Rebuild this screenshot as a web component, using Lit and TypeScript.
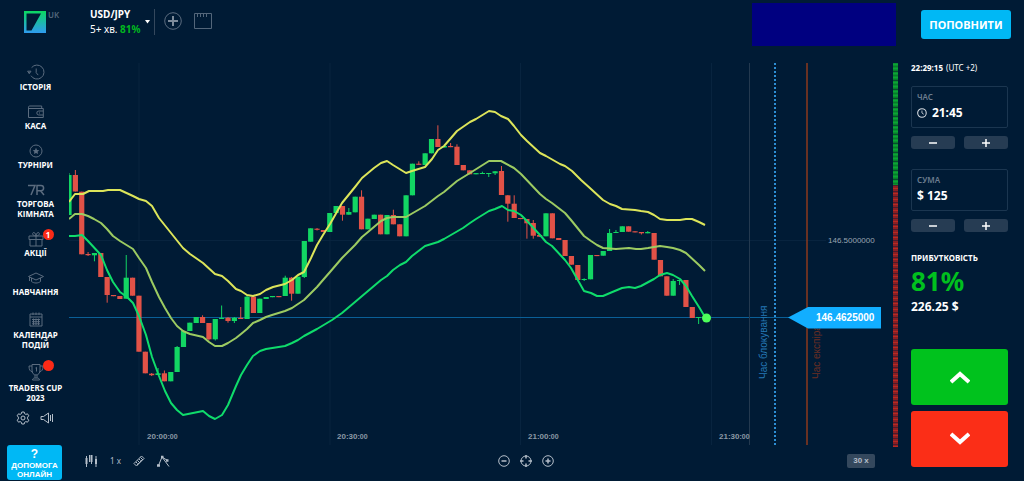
import { LitElement, html, css, svg } from "lit";
import { customElement, state } from "lit/decorators.js";

// open, close, high, low in chart units (y grows downwards)
type Candle = [number, number, number?, number?];

const CANDLES: Candle[] = [
  [215, 175, 173], [175, 191.5, 170], [191.7, 254.3], [254, 255.2, 252, 256], [255.3, 253, 253, 261.3],
  [253, 277], [277, 295, 277, 302.7], [295, 296.2], [296, 299], [298.7, 277.7, 255],
  [277.7, 295.7], [295.7, 351.7], [351.7, 373.3], [373.7, 375.2, 373, 376], [375, 373.3, 368],
  [373.3, 381.3, 370.5], [381.3, 372], [372, 347, 346], [347, 331], [331, 322.7],
  [323, 317], [317, 323, 315.3], [323, 339.3, 323, 340.5], [339.3, 319, 319, 340.5], [319, 317.8, 305.5],
  [317.7, 321, 317, 322.7], [321, 317.7, 317, 323], [317.8, 319, 307], [319, 296.7, 295], [296.7, 313],
  [313, 298.7], [299, 297], [297.2, 296], [296, 297.2], [296, 277.7, 275.7],
  [277.7, 293.7, 277, 300.7], [293.7, 276.7], [277, 241, 241, 278], [241.7, 228.3], [228.7, 229.8, 228, 230.5],
  [230, 232], [232, 213], [213, 206], [206, 214.7, 206, 220.7], [214.7, 212, 208],
  [212.3, 196.7], [196.7, 229.3, 190.3], [229.3, 218.7], [219, 214.7], [214.7, 234.3],
  [234.3, 215], [215, 224.3, 209.7], [224.3, 236.3], [236.3, 195.3], [195.3, 163.7],
  [163.7, 164.8, 161.3], [165, 153.3], [153.3, 139], [139, 147, 125.3], [147.5, 146],
  [146, 147.2, 143], [146.7, 165, 144.3], [165, 170.3], [170.3, 174.3], [174.3, 173.1],
  [174, 173, 171.7], [174, 173, 173, 177], [173.3, 171.3, 171, 175], [171, 195, 166], [195.3, 203.7, 195, 221.7],
  [203.7, 218, 195.3], [218, 219.1], [219, 223.3, 219, 238.7], [223, 235.7, 220, 238.7], [235, 236.7],
  [236.3, 213.3], [213.3, 238.3], [238, 240], [240, 256], [256, 264.7],
  [265, 280], [280, 279, 278.3, 281], [279.3, 255], [255, 256.1], [255.7, 251],
  [251, 233, 229], [233, 232, 230], [232, 226.3], [226.3, 231.7], [231.3, 232.4],
  [232, 233.3, 232, 234.5], [233.3, 232, 231], [233, 259.7], [260, 276.3], [276.3, 295.7],
  [295.7, 281, 279], [281, 280, 280, 285], [280, 307], [307, 318], [318, 317, 317, 324],
];

const UPPER =
  "69,202 75,194 83,194 89,191 103,191 108,190 120,190 133,196 139,199 146,201 152,206 159,218 171,233 183,248 190,254 203,263 215,274 222,276 228,281 236,289 241,291 247,295 253,296 260,294 266,290 273,287 285,284 292,280 298,275 304,272 311,258 317,245 323,235 330,224 342,203 355,187 362,178 368,173 374,168 381,163 387,161 393,165 406,173 412,171 425,167 432,159 438,150 444,146 451,138 457,131 470,122 476,119 489,111 495,112 501,116 508,119 514,126 521,135 527,141 540,153 546,156 560,164 565,166 572,171 581,180 591,189 603,200 610,204 616,206 622,209 635,210 641,211 648,212 654,215 660,219 667,220 680,220 686,219 692,219 699,222 705,225";
const MIDDLE =
  "69,219 75,214 82,214 88,216 94,219 101,223 107,229 113,236 120,241 133,249 139,258 146,268 152,282 159,297 165,308 171,318 177,326 183,331 190,334 203,337 209,342 215,346 222,346 228,343 236,338 241,334 247,329 253,323 260,320 266,317 272,315 285,311 292,308 298,304 304,300 317,287 323,280 330,272 342,258 355,245 362,237 368,232 381,221 387,218 393,217 406,217 425,206 438,196 444,192 457,181 470,173 489,161 501,161 514,168 521,174 540,194 546,199 552,203 565,213 571,220 584,236 591,241 597,245 603,248 616,249 629,248 636,249 641,249 648,248 660,246 667,247 673,248 680,250 686,253 699,265 705,271";
const LOWER =
  "69,236 75,236 82,235 88,241 101,255 107,270 113,282 120,292 127,297 133,303 139,316 146,335 152,357 159,376 165,391 171,403 177,410 183,415 203,411 209,416 215,419 222,415 228,405 236,386 241,375 247,365 253,356 260,351 266,349 285,346 292,343 298,340 304,336 317,329 332,320 342,313 355,302 381,280 387,276 393,270 400,265 406,262 412,256 425,246 438,242 444,239 463,228 470,223 476,219 489,211 495,209 502,206 508,210 514,211 521,215 527,221 540,235 546,242 552,246 565,260 571,268 584,291 591,293 597,296 603,296 610,293 622,288 629,287 635,288 641,286 654,279 660,275 667,273 673,275 680,279 686,286 692,296 699,307 705,317";

const ICONS = {
  history: svg`<path d="M4.6 3.6A7 7 0 1 1 4 11.7M2.2 8v1.500M.6 7.200h3.400L2.300 9.600zM9.200 4.500v4.200l2 2.400"/>`,
  wallet: svg`<path d="M1.500 14.500V4.200a1.200 1.200 0 0 1 1.200-1.200h12v2.500M1.500 5.500h14.800v9H1.500M16.300 8h-4.500a2 2 0 0 0 0 4h4.500M12 10h1"/>`,
  star: svg`<circle cx="9" cy="9" r="6"/><path class="solid" d="M9 5.800l1 2.200 2.300.2-1.700 1.600.5 2.300L9 10.900l-2.100 1.200.5-2.300-1.700-1.600L8 8z"/>`,
  room: svg`<path stroke-width="1.500" d="M1 4.500h7L4 14M10 14V4.500h4a2.600 2.600 0 0 1 0 5.200h-4M13.500 9.700L17 14"/>`,
  gift: svg`<path d="M2 6h14v3.500H2zM3 9.500h12V16H3zM9 6v10M9 6C6.500 5.800 5.300 4.600 5.700 3.300 6.200 1.800 8.500 2.200 9 6c.5-3.800 2.800-4.200 3.300-2.700C12.700 4.600 11.500 5.800 9 6"/>`,
  cap: svg`<path d="M9 4l7.500 3.500L9 11 1.500 7.500zM4.500 9v3.500c2.500 2 6.500 2 9 0V9M2.500 8v4"/>`,
  calendar: svg`<path d="M3 4h12v12H3zM3 7h12M6 2.500V5M9 2.500V5M12 2.500V5M5 9.500h8M5 11.700h8M5 13.800h8M6.500 8.500v6.500M9 8.500v6.500M11.500 8.500v6.500"/>`,
  cup: svg`<path d="M5 1.500h8V7c0 3-1.500 5-4 5S5 10 5 7zM5 3H2c0 3.500 1 5.500 3.600 6M13 3h3c0 3.500-1 5.500-3.600 6M8 12v3M10 12v3M5.500 17c0-1.500 1-2 3.500-2s3.500.5 3.500 2zM8.500 5L9.500 4.300V8.500"/>`,
};

type IconName = keyof typeof ICONS;

interface MenuItem {
  icon: IconName;
  label: string;
  tall?: boolean;
  badge?: string;
}

const MENU: MenuItem[] = [
  { icon: "history", label: "ІСТОРІЯ" },
  { icon: "wallet", label: "КАСА" },
  { icon: "star", label: "ТУРНІРИ" },
  { icon: "room", label: "ТОРГОВА КІМНАТА" },
  { icon: "gift", label: "АКЦІЇ", badge: "1" },
  { icon: "cap", label: "НАВЧАННЯ" },
  { icon: "calendar", label: "КАЛЕНДАР ПОДІЙ", tall: true },
  { icon: "cup", label: "TRADERS CUP 2023", tall: true, badge: "" },
];

@customElement("side-menu")
class SideMenu extends LitElement {
  static styles = css`
    :host { display: flex; flex-direction: column; align-items: center; }
    .list { display: flex; flex-direction: column; gap: 11px; align-self: stretch; padding: 1px 0 0 2px; }
    a { display: flex; flex-direction: column; align-items: center; color: #fff; text-decoration: none; text-align: center; font-weight: 700; font-size: 8px; line-height: 10px; }
    .icon { position: relative; height: 18px; display: flex; align-items: center; }
    .tall { height: 22px; }
    svg { width: 18px; height: 18px; fill: none; stroke: #5b6c7f; stroke-width: 1; display: block; }
    .solid { fill: #5b6c7f; stroke: none; }
    .label { max-width: 60px; }
    .badge { position: absolute; left: 16px; top: -1px; width: 11px; height: 11px; border-radius: 50%; background: #fb2a17; line-height: 11px; font-size: 8px; }
    .tools { display: flex; gap: 10px; margin-top: 7px; }
    button { border: 0; padding: 0; background: none; font: inherit; color: #fff; cursor: pointer; }
    .tools svg { width: 14px; height: 16px; stroke: #b4bec9; }
    .help { width: 55px; height: 35px; margin-top: 19px; border-radius: 3px; background: #00b8f5; font-family: "Liberation Sans", Arial, sans-serif; font-weight: 700; font-size: 8px; line-height: 9px; }
    .mark { display: block; font-size: 12px; line-height: 14px; }
  `;

  render() {
    return html`
      <nav class="list">
        ${MENU.map(
          (m) => html`<a href="#">
            <span class="icon ${m.tall ? "tall" : ""}">
              <svg viewBox="0 0 18 18">${ICONS[m.icon]}</svg>
              ${m.badge === undefined ? "" : html`<span class="badge">${m.badge}</span>`}
            </span>
            <span class="label">${m.label}</span>
          </a>`
        )}
      </nav>
      <div class="tools">
        <button aria-label="Налаштування">
          <svg viewBox="0 0 14 16"><path d="M5.800 2h2.400l.4 1.700 1.300.7 1.600-.6 1.300 2-1.200 1.300v1.800l1.200 1.300-1.300 2-1.600-.6-1.300.7-.4 1.700H5.800l-.4-1.700-1.300-.7-1.600.6-1.300-2 1.200-1.300V7.100L1.200 5.800l1.300-2 1.600.6 1.300-.7z"/><circle cx="7" cy="8" r="2"/></svg>
        </button>
        <button aria-label="Звук">
          <svg viewBox="0 0 14 16"><path d="M1 6.500h2.500L8.500 3v10L3.500 9.500H1zM10.500 5v6M12.500 4v8"/></svg>
        </button>
      </div>
      <button class="help"><span class="mark">?</span>ДОПОМОГА ОНЛАЙН</button>
    `;
  }
}

@customElement("price-chart")
class PriceChart extends LitElement {
  static styles = css`
    :host { display: block; }
    svg { display: block; width: 100%; height: auto; font-family: "Liberation Sans", Arial, sans-serif; }
    .grid { stroke: #08243f; stroke-width: 1; }
    .up { fill: #12d663; stroke: #12d663; }
    .down { fill: #e25247; stroke: #e25247; }
    .body { stroke: none; }
    .wick { stroke-width: 1; }
    .line { fill: none; stroke-width: 2; stroke-linejoin: round; }
    .upper { stroke: #dce55a; }
    .middle { stroke: #9ccb62; }
    .lower { stroke: #0fdc6b; }
    .price { stroke: #0a5f97; stroke-width: 1; }
    .now { stroke: #23394f; stroke-width: 1; }
    .block { stroke: #2d8fd5; stroke-width: 2; stroke-dasharray: 2 2; }
    .expiry { stroke: #8c3a1d; stroke-width: 1.5; }
    .axis { fill: #8d99a6; font-size: 8px; font-weight: 700; }
    .sec { font-size: 7px; }
    .value { fill: #9aa5b1; font-size: 8px; }
    .turned { font-size: 10px; }
    .tag { fill: #12aeff; }
    .tagtext { fill: #fff; font-size: 10px; font-weight: 700; }
    .dot { fill: #4dff5a; }
  `;

  render() {
    const times: [number, string][] = [[147, "20:00"], [337, "20:30"], [528, "21:00"], [719, "21:30"]];
    return html`<svg viewBox="69 63 829 384" role="img" aria-label="USD/JPY">
      <defs>
        <pattern id="buy" width="6" height="9" patternUnits="userSpaceOnUse">
          <rect width="6" height="9" fill="#077a2b" /><path d="M0 1.500h6M0 5.500h6" stroke="#0aa534" stroke-width="2" /><path d="M0 8.500h6" stroke="#064e2c" />
        </pattern>
        <pattern id="sell" width="6" height="11" patternUnits="userSpaceOnUse">
          <rect width="6" height="11" fill="#8a1f24" /><path d="M0 1.500h6M0 6.500h6" stroke="#b92a22" /><path d="M0 4.500h6M0 9.500h6" stroke="#4c1b2c" />
        </pattern>
      </defs>
      <path class="grid" d="M139 63V445M330 63V445M520.500 63V445M711.500 63V445M69 240.500H826" />
      <path class="price" d="M69 317.500H800" />
      ${CANDLES.map(([open, close, high, low], i) => {
        const x = 69 + i * 6.36;
        const top = Math.min(open, close);
        const bottom = Math.max(open, close);
        const kind = close < open ? "up" : "down";
        return svg`<g class=${kind}>
          <line class="wick" x1=${x} x2=${x} y1=${high ?? top} y2=${low ?? bottom}></line>
          <rect class="body" x=${x - 2.6} y=${top} width="5.2" height=${bottom - top}></rect>
        </g>`;
      })}
      <polyline class="line upper" points=${UPPER} />
      <polyline class="line middle" points=${MIDDLE} />
      <polyline class="line lower" points=${LOWER} />
      <circle class="dot" cx="706.500" cy="318" r="4.500" />
      <path class="now" d="M749.500 63V445" />
      <path class="block" d="M775 63V445" />
      <path class="expiry" d="M807 63V445" />
      <text class="turned" fill="#2478b5" transform="translate(767 379) rotate(-90)">Час блокування</text>
      <text class="turned" fill="#6c2e22" transform="translate(820 379) rotate(-90)">Час експірації</text>
      <path class="tag" d="M788 317.500L808 307H881V328.500H808z" />
      <text class="tagtext" x="816" y="321">146.4625000</text>
      <text class="value" x="828" y="243">146.5000000</text>
      ${times.map(([x, t]) => svg`<text class="axis" x=${x} y="439">${t}<tspan class="sec">:00</tspan></text>`)}
      <rect x="893" y="63" width="5" height="122" fill="url(#buy)" />
      <rect x="893" y="185" width="5" height="262" fill="url(#sell)" />
    </svg>`;
  }
}

@customElement("app-root")
class AppRoot extends LitElement {
  static styles = css`
    :host { display: block; min-height: 100vh; background: #001b35; color: #fff; font-family: "Noto Sans", "Open Sans", sans-serif; overflow: hidden; }
    button, input { font: inherit; color: inherit; border: 0; padding: 0; margin: 0; background: none; }
    button { cursor: pointer; }
    svg { display: block; fill: none; }
    header { display: flex; align-items: center; height: 44px; padding: 0 13px 19px 24px; }
    .brand { display: flex; gap: 2px; width: 66px; align-items: flex-start; color: #53677c; font-size: 8px; font-weight: 600; line-height: 8px; }
    .pair { display: flex; align-items: center; gap: 4px; height: 26px; padding-right: 4px; border-right: 1px solid #34485d; text-align: left; font-size: 10px; line-height: 15px; }
    .name { display: block; font-weight: 700; }
    .green { color: #00b81f; font-weight: 700; }
    .add { margin: 0 12px 2px 9px; }
    .tab { margin-bottom: 2px; }
    .banner { width: 144px; height: 43px; margin: 4px 25px 0 auto; background: #000080; }
    .deposit { height: 29px; width: 90px; margin-top: 5px; border-radius: 3px; background: #00b8f5; font-size: 11px; font-weight: 700; white-space: nowrap; }
    .work { display: grid; grid-template-columns: 69px minmax(0, 1fr) 126px; }
    .tools { display: flex; align-items: center; height: 27px; padding: 0 23px 0 15px; color: #b4bec9; font-size: 8px; }
    .tools svg { stroke: #b4bec9; }
    .kinds, .zoom { display: flex; align-items: center; }
    .kinds { gap: 12px; }
    .zoom { gap: 10px; margin: 0 auto; padding-left: 36px; }
    .scale { width: 28px; height: 14px; border-radius: 2px; background: #34485d; font-family: "Liberation Sans", Arial, sans-serif; font-weight: 700; }
    .trade { display: flex; flex-direction: column; padding: 0 16px 0 13px; font-size: 8px; line-height: 10px; }
    .clock b { margin-right: 1px; }
    .field { display: block; border: 1px solid #1b3650; border-radius: 2px; margin-top: 13px; padding: 5px; height: 30px; color: #6c7d8f; font-weight: 600; }
    .entry { display: flex; align-items: center; gap: 5px; margin-top: 3px; color: #fff; font-size: 12px; line-height: 16px; font-weight: 700; }
    .entry input { width: 100%; min-width: 0; height: 16px; outline: 0; }
    .steps { display: grid; grid-template-columns: 1fr 1fr; gap: 9px; margin: 8px 0 7px; }
    .steps button { height: 13px; border-radius: 3px; background: #263c53; display: grid; place-items: center; }
    .steps path { stroke: #fff; stroke-width: 1.5; }
    .caption { margin-top: 14px; font-weight: 700; }
    .percent { color: #00c01e; font-size: 26px; line-height: 36px; font-weight: 700; }
    .payout { font-size: 12px; line-height: 16px; font-weight: 700; }
    .call, .put { display: grid; place-items: center; height: 56px; border-radius: 3px; background: #00c21d; margin-top: 34px; }
    .put { background: #fb2e17; margin-top: 6px; }
    .call path, .put path { stroke: #fff; stroke-width: 4; }
  `;

  @state() time = "21:45";
  @state() amount = 125;

  private steps(minus: () => void, plus: () => void) {
    return html`<div class="steps">
      <button aria-label="Менше" @click=${minus}><svg width="10" height="10"><path d="M1 5h8" /></svg></button>
      <button aria-label="Більше" @click=${plus}><svg width="10" height="10"><path d="M1 5h8M5 1v8" /></svg></button>
    </div>`;
  }

  private shift(minutes: number) {
    const [h, m] = this.time.split(":").map(Number);
    const total = (h * 60 + m + minutes + 1440) % 1440;
    this.time = `${String(Math.floor(total / 60)).padStart(2, "0")}:${String(total % 60).padStart(2, "0")}`;
  }

  render() {
    return html`
      <header>
        <div class="brand">
          <svg width="22" height="22" viewBox="0 0 22 22">
            <defs><linearGradient id="logo" x1="0" y1="0" x2="0" y2="1"><stop offset="0" stop-color="#0bd860" /><stop offset="1" stop-color="#2f9bf0" /></linearGradient></defs>
            <path fill="url(#logo)" fill-rule="evenodd" d="M0 0h22v22H0zM2.500 2.500v17H7.500L17 2.500z" />
          </svg>
          <span>UK</span>
        </div>
        <button class="pair">
          <span><span class="name">USD/JPY</span>5+ хв. <span class="green">81%</span></span>
          <svg width="5" height="4"><path fill="#fff" d="M0 0h5L2.500 3.500z" /></svg>
        </button>
        <button class="add" aria-label="Додати">
          <svg width="18" height="18"><circle cx="9" cy="9" r="8.300" stroke="#5b6c7f" /><path d="M4 9h10M9 4v10" stroke="#7d8b9a" stroke-width="2" /></svg>
        </button>
        <button class="tab" aria-label="Вигляд">
          <svg width="18" height="16" stroke="#53667a"><path d="M.5.500h17v15H.5zM3.500 1v3M6.500 1v3M9.500 1v3M12.500 1v3" /></svg>
        </button>
        <div class="banner"></div>
        <button class="deposit">ПОПОВНИТИ</button>
      </header>
      <div class="work">
        <side-menu></side-menu>
        <main>
          <price-chart></price-chart>
          <div class="tools">
            <div class="kinds">
              <button aria-label="Свічки"><svg width="14" height="12"><path stroke-width="2" d="M2.500 3v6M7.500 0v7M12 4v5" /><path d="M2.500 1v11M7.500 0v9M12 1v11M5.500 0v7" /></svg></button>
              <button>1 x</button>
              <button aria-label="Лінійка"><svg width="12" height="12"><path d="M1 8.500L8.500 1l2.500 2.500L3.500 11zM3 7l1.500 1.500M4.500 5.500L6 7M6 4l1.500 1.500M7.500 2.500L9 4M4 10l6-6" /></svg></button>
              <button aria-label="Індикатори"><svg width="13" height="12"><path d="M1.500 10.500L5 2l5.500 3.500M5 2l7 9.500" /><path stroke-width="2.500" d="M0 10.500h3M4 2h2.500M9 5.500h2.500" /></svg></button>
            </div>
            <div class="zoom">
              <button aria-label="Зменшити"><svg width="12" height="12"><circle cx="6" cy="6" r="5.300" /><path stroke-width="1.500" d="M3.500 6h5" /></svg></button>
              <button aria-label="Центр"><svg width="12" height="12"><circle cx="6" cy="6" r="5" /><path stroke-width="1.500" d="M6 0v3.500M6 8.500V12M0 6h3.500M8.500 6H12" /></svg></button>
              <button aria-label="Збільшити"><svg width="12" height="12"><circle cx="6" cy="6" r="5.300" /><path stroke-width="1.500" d="M3.500 6h5M6 3.500v5" /></svg></button>
            </div>
            <button class="scale">30 x</button>
          </div>
        </main>
        <aside class="trade">
          <div class="clock"><b>22:29:15</b> (UTC +2)</div>
          <label class="field">ЧАС
            <span class="entry">
              <svg width="12" height="12" viewBox="0 0 12 12"><circle cx="6" cy="6" r="5.200" stroke="#d5dbe1" stroke-width="1.300" /><path d="M6 3v3l2.200 1.500" stroke="#d5dbe1" /></svg>
              <input .value=${this.time} />
            </span>
          </label>
          ${this.steps(() => this.shift(-1), () => this.shift(1))}
          <label class="field">СУМА
            <span class="entry"><input .value=${"$ " + this.amount} /></span>
          </label>
          ${this.steps(() => (this.amount -= 1), () => (this.amount += 1))}
          <div class="caption">ПРИБУТКОВІСТЬ</div>
          <div class="percent">81%</div>
          <div class="payout">${(this.amount * 1.81).toFixed(2)} $</div>
          <button class="call" aria-label="Вгору"><svg width="20" height="14"><path d="M1 12L10 4l9 8" /></svg></button>
          <button class="put" aria-label="Вниз"><svg width="20" height="14"><path d="M1 2l9 8 9-8" /></svg></button>
        </aside>
      </div>
    `;
  }
}
